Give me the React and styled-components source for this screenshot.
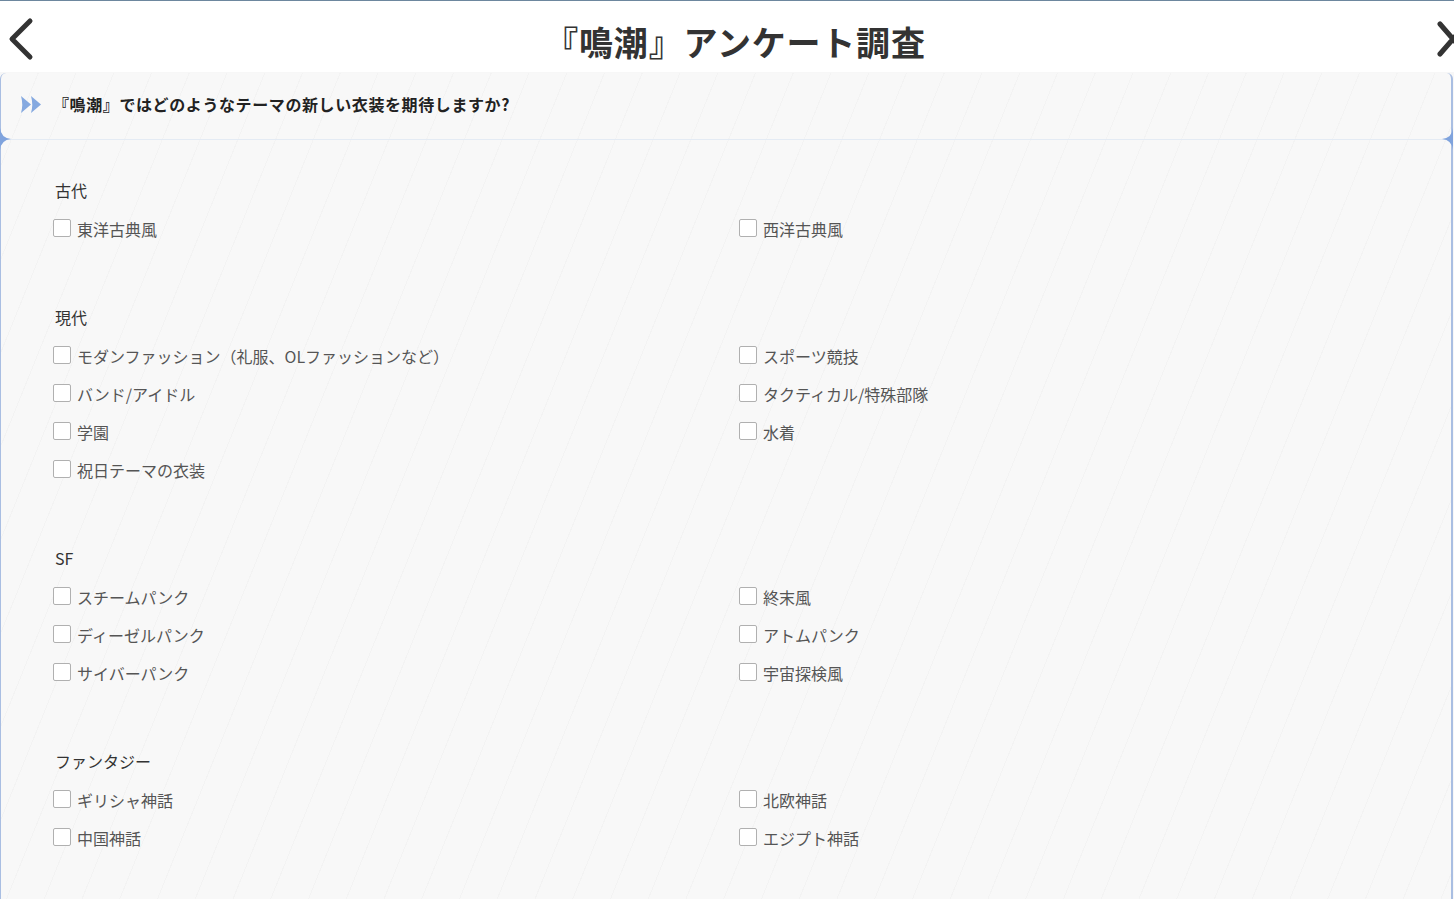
import styled, { createGlobalStyle } from "styled-components";

const GlobalStyle = createGlobalStyle`
  html, body {
    margin: 0;
    padding: 0;
    background: #f7f7f7;
    overflow: hidden;
  }
  body {
    font-family: "Noto Sans CJK JP", "Noto Sans", sans-serif;
    color: #333;
  }
`;

const Page = styled.div`
  width: 1454px;
  min-height: 899px;
  display: flex;
  flex-direction: column;
`;

const Header = styled.header`
  width: 1480px;
  height: 72px;
  box-sizing: border-box;
  border-top: 1px solid #6d879e;
  background: #fff;
  display: grid;
  grid-template-columns: 60px 1fr 60px;
  align-items: center;
`;

const IconBtn = styled.button`
  border: 0;
  background: none;
  padding: 0;
  width: 60px;
  height: 60px;
  margin-top: 4px;
  display: flex;
  align-items: center;
  justify-content: ${(p) => (p.$right ? "flex-end" : "flex-start")};
  padding-left: ${(p) => (p.$right ? "0" : "6px")};
  padding-right: ${(p) => (p.$right ? "10px" : "0")};
  box-sizing: border-box;
  cursor: pointer;
`;

const Title = styled.h1`
  margin: 0;
  text-align: center;
  font-size: 34px;
  font-weight: 700;
  color: #333;
  letter-spacing: 0.8px;
  line-height: 1;
  padding: 10px 10px 0 0;
`;

const Card = styled.section`
  position: relative;
  flex: 1;
  margin-top: 1px;
  width: 1453px;
  box-sizing: border-box;
  border-left: 1px solid #a9bee2;
  border-right: 2px solid #a9bee2;
  border-radius: 6px 6px 0 0;
  background-color: #f8f8f8;
  background-image: repeating-linear-gradient(
    112deg,
    transparent 0 34px,
    rgba(0, 0, 0, 0.018) 34px 35px
  );
`;

const Question = styled.div`
  position: relative;
  height: 67px;
  box-sizing: border-box;
  border-bottom: 1px solid #e4ebf4;
  display: flex;
  align-items: center;
  gap: 11px;
  padding-left: 19px;
  padding-bottom: 4px;
  font-size: 16px;
  font-weight: 700;
  color: #222;
  letter-spacing: 0.6px;
`;

const Flare = styled.svg`
  position: absolute;
  bottom: -11px;
  ${(p) => (p.$right ? "right: -2px;" : "left: -1px;")}
`;

const Body = styled.div`
  padding: 38px 0 40px 52px;
  display: flex;
  flex-direction: column;
  gap: 57px;
`;

const Group = styled.div`
  display: flex;
  flex-direction: column;
`;

const GroupLabel = styled.div`
  font-size: 16px;
  line-height: 24px;
  color: #333;
  padding-left: 2px;
  margin-bottom: 8px;
`;

const Options = styled.div`
  display: grid;
  grid-template-columns: 686px 686px;
  grid-auto-rows: 38px;
`;

const Option = styled.label`
  display: flex;
  align-items: center;
  gap: 6px;
  font-size: 16px;
  color: #555;
  cursor: pointer;
`;

const Box = styled.span`
  width: 18px;
  height: 18px;
  box-sizing: border-box;
  border: 1px solid #b0b0b0;
  border-radius: 2px;
  background: #fff;
  flex: none;
  margin-top: -2px;
`;

const groups = [
  { label: "古代", items: ["東洋古典風", "西洋古典風"] },
  {
    label: "現代",
    items: [
      "モダンファッション（礼服、OLファッションなど）",
      "スポーツ競技",
      "バンド/アイドル",
      "タクティカル/特殊部隊",
      "学園",
      "水着",
      "祝日テーマの衣装",
    ],
  },
  {
    label: "SF",
    items: ["スチームパンク", "終末風", "ディーゼルパンク", "アトムパンク", "サイバーパンク", "宇宙探検風"],
  },
  { label: "ファンタジー", items: ["ギリシャ神話", "北欧神話", "中国神話", "エジプト神話"] },
];

function Arrows() {
  return (
    <svg width="22" height="17" viewBox="0 0 22 17">
      <path d="M1 0 L11 8.5 L1 17 Q3.5 8.5 1 0 Z" fill="#85a9e0" />
      <path d="M11 0 L21 8.5 L11 17 Q13.5 8.5 11 0 Z" fill="#85a9e0" />
    </svg>
  );
}

export default function App() {
  return (
    <Page>
      <GlobalStyle />
      <Header>
        <IconBtn aria-label="back">
          <svg width="30" height="44" viewBox="0 0 30 44">
            <path d="M24 4 L6 22 L24 40" fill="none" stroke="#333" strokeWidth="5" strokeLinecap="round" strokeLinejoin="round" />
          </svg>
        </IconBtn>
        <Title>『鳴潮』アンケート調査</Title>
        <IconBtn $right aria-label="close">
          <svg width="34" height="38" viewBox="0 0 34 38">
            <path d="M4 4 L30 34 M30 4 L4 34" fill="none" stroke="#333" strokeWidth="5" strokeLinecap="round" />
          </svg>
        </IconBtn>
      </Header>
      <Card>
        <Question>
          <Arrows />
          <span>『鳴潮』ではどのようなテーマの新しい衣装を期待しますか?</span>
          <Flare width="11" height="22" viewBox="0 0 11 22">
            <path d="M0 0 Q1 10 11 11 Q1 12 0 22 Z" fill="#7fa3dd" />
          </Flare>
          <Flare $right width="11" height="22" viewBox="0 0 11 22">
            <path d="M11 0 Q10 10 0 11 Q10 12 11 22 Z" fill="#7fa3dd" />
          </Flare>
        </Question>
        <Body>
          {groups.map((g) => (
            <Group key={g.label}>
              <GroupLabel>{g.label}</GroupLabel>
              <Options>
                {g.items.map((it) => (
                  <Option key={it}>
                    <Box />
                    {it}
                  </Option>
                ))}
              </Options>
            </Group>
          ))}
        </Body>
      </Card>
    </Page>
  );
}
